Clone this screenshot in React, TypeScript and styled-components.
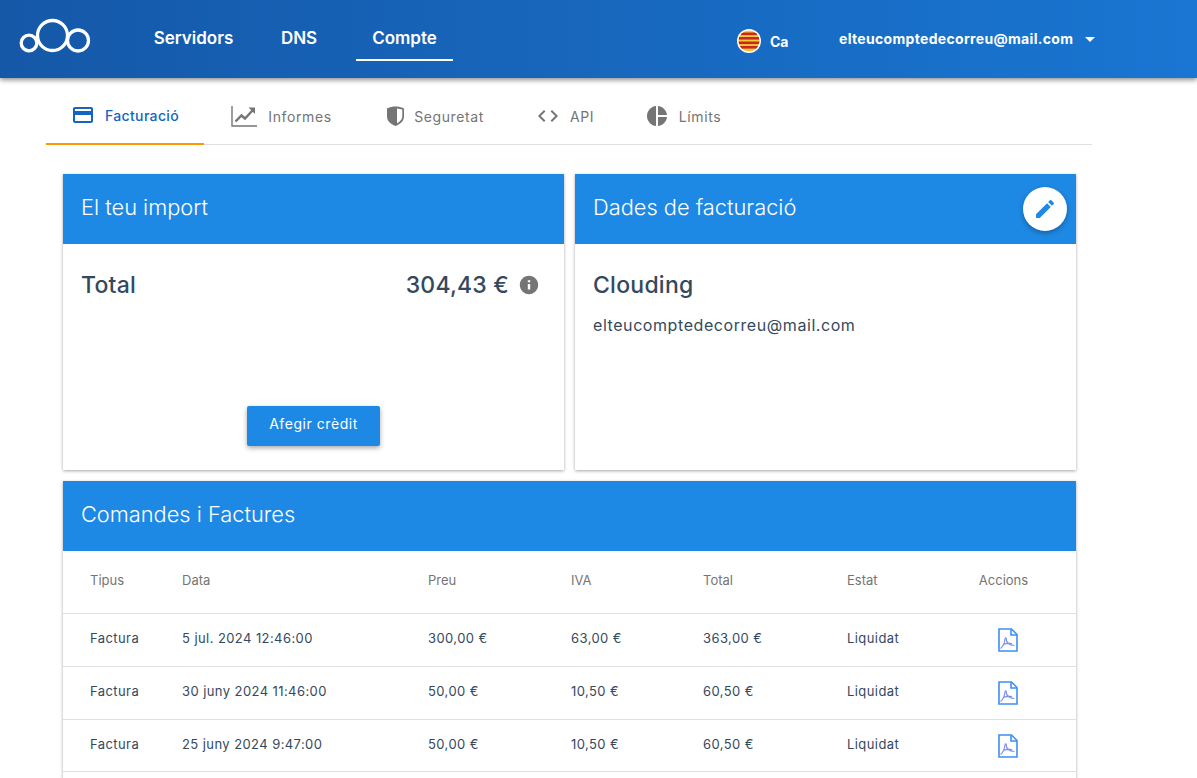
import React from "react";
import styled, { createGlobalStyle } from "styled-components";

const Global = createGlobalStyle`
  html, body { margin: 0; padding: 0; background: #fff; height: 778px; overflow: hidden; }
  body { font-family: Inter, Roboto, "Liberation Sans", sans-serif; }
  * { box-sizing: border-box; }
`;
const Page = styled.div`width: 1197px; height: 778px; overflow: hidden;`;
const Header = styled.header`
  height: 78px; display: flex; align-items: center; color: #fff; position: relative; z-index: 2;
  background: linear-gradient(90deg, #1558a8 0%, #1976d2 100%);
  box-shadow: 0 2px 5px rgba(0,0,0,.45);
`;
const LogoBox = styled.div`width: 154px; padding-left: 19px; display: flex; margin-top: -6px;`;
const NavLink = styled.a<{ $active?: boolean; $w: number; $ml?: number }>`
  width: ${p => p.$w}px; margin-left: ${p => p.$ml ?? 0}px; height: 44px; display: flex; align-items: center; justify-content: center;
  font-size: 17px; font-weight: 600; padding-top: 0;
  border-bottom: 2px solid ${p => (p.$active ? "#fff" : "transparent")};
`;
const Nav = styled.nav`display: flex; align-items: center;`;
const Lang = styled.div`
  margin-left: 284px; display: flex; align-items: center; gap: 9px; font-size: 14px; font-weight: 700; margin-top: 3px; width: 102px;
  span { position: relative; top: 1px; }
`;
const User = styled.div`display: flex; align-items: center; gap: 12px; font-size: 14px; font-weight: 700; letter-spacing: .32px; margin-top: -2px;`;
const Caret = styled.i`width: 0; height: 0; border-left: 5.5px solid transparent; border-right: 5.5px solid transparent; border-top: 5px solid #fff; margin-top: 2px;`;
const Tabs = styled.div`margin-left: 46px; width: 1046px; height: 67px; display: flex; border-bottom: 1px solid #e0e0e0;`;
const Tab = styled.a<{ $active?: boolean; $w: number }>`
  width: ${p => p.$w}px; height: 67px; display: flex; align-items: center; justify-content: center; gap: 10px;
  font-size: 14px; font-weight: ${p => (p.$active ? 500 : 400)}; letter-spacing: ${p => (p.$active ? ".35px" : ".6px")}; padding-top: 9px;
  color: ${p => (p.$active ? "#1565c0" : "#757575")};
  border-bottom: ${p => (p.$active ? "2px solid #ff9800" : "none")};
`;
const Content = styled.main`padding: 29px 0 0 63px; width: 1076px; display: grid; grid-template-columns: 501px 501px; gap: 11px;`;
const Card = styled.section<{ $wide?: boolean }>`
  background: #fff; position: relative;
  grid-column: ${p => (p.$wide ? "1 / 3" : "auto")};
  height: ${p => (p.$wide ? "500px" : "296px")};
  box-shadow: 0 1px 3px rgba(0,0,0,.35);
`;
const CardHead = styled.h2`
  margin: 0; height: 70px; background: #1e88e5; color: #fff; font-size: 21.8px; font-weight: 300;
  display: flex; align-items: center; padding: 0 18px 4px;
`;
const Fab = styled.button`
  position: absolute; right: 9px; top: 13px; width: 44px; height: 44px; border-radius: 50%; border: 0; background: #fff;
  display: flex; align-items: center; justify-content: center; box-shadow: 0 2px 5px rgba(0,0,0,.3); padding: 0;
`;
const TotalRow = styled.div`
  display: flex; align-items: center; padding: 27px 24px 0 18px; font-size: 23px; font-weight: 500; color: #34495e; line-height: 28px; letter-spacing: .2px;
`;
const Amount = styled.span`margin-left: auto; margin-right: 9px;`;
const ButtonWrap = styled.div`position: absolute; left: 0; right: 0; bottom: 24px; display: flex; justify-content: center;`;
const Btn = styled.button`
  width: 133px; height: 40px; border: 0; border-radius: 2px; background: #1e88e5; color: #fff; font: 400 14px Inter, sans-serif; letter-spacing: .55px;
  padding-bottom: 6px; box-shadow: 0 2px 5px rgba(0,0,0,.35);
`;
const Company = styled.div`padding: 27px 18px 0; font-size: 23px; font-weight: 500; color: #34495e; line-height: 28px; letter-spacing: .25px;`;
const Mail = styled.div`padding: 16px 18px 0; font-size: 16px; color: #34495e; line-height: 20px; letter-spacing: .57px;`;
const Row = styled.div<{ $head?: boolean }>`
  display: grid; grid-template-columns: 92px 246px 143px 132px 144px 112px 89px; padding-left: 27px; align-items: center;
  height: ${p => (p.$head ? "63px" : "53px")}; border-bottom: 1px solid #e0e0e0;
  font-size: 13px; font-weight: 400; letter-spacing: ${p => (p.$head ? "0" : ".42px")}; color: ${p => (p.$head ? "#757575" : "#34495e")};
  &:last-child { height: 52px; }
`;
const Cell = styled.div`position: relative; top: -2px;`;
const HeadAction = styled(Cell)`text-align: center;`;
const Action = styled.div`display: flex; justify-content: center; position: relative; left: 4px;`;

const Logo = () => (
  <svg width="72" height="36" viewBox="0 0 72 36" fill="none" stroke="#fff" strokeWidth="3.3">
    <circle cx="10" cy="25" r="7.8" />
    <circle cx="33.5" cy="17.5" r="15" />
    <circle cx="59" cy="22.5" r="10.5" />
  </svg>
);
const Flag = () => (
  <svg width="24" height="24" viewBox="0 0 24 24">
    <defs><clipPath id="fc"><circle cx="12" cy="12" r="10.5" /></clipPath></defs>
    <circle cx="12" cy="12" r="12" fill="#fff" />
    <g clipPath="url(#fc)">
      <rect width="24" height="24" fill="#f5c93c" />
      <rect y="3.5" width="24" height="2.6" fill="#c8281e" />
      <rect y="8" width="24" height="2.6" fill="#c8281e" />
      <rect y="12.5" width="24" height="2.6" fill="#c8281e" />
      <rect y="17" width="24" height="2.6" fill="#c8281e" />
    </g>
  </svg>
);
const Icon = ({ d, fill, size = 24 }: { d: string; fill: string; size?: number }) => (
  <svg width={size} height={size} viewBox="0 0 24 24" fill={fill}><path d={d} /></svg>
);
const TrendIcon = () => (
  <svg width="27" height="24" viewBox="0 0 27 24" fill="none" stroke="#757575">
    <path d="M1 2v20h25" strokeWidth="1.400" />
    <path d="M4.500 17.500l6-6 3.500 3 7.500-8" strokeWidth="2.400" />
    <path d="M17.500 3.500h6.500v6.500z" fill="#757575" stroke="none" />
  </svg>
);
const ShieldIcon = () => (
  <svg width="17" height="20" viewBox="0 0 17 20">
    <path fillRule="evenodd" fill="#757575" d="M0 2.500C3 1 5.500.5 8.500.5s5.500.5 8.500 2v8c0 4.500-3.500 7.500-8.500 9.500C3.500 18 0 15 0 10.500zM10 2.400v14.800c3-1.500 5.300-3.800 5.300-6.900V3.600c-1.700-.7-3.500-1.100-5.300-1.200z" />
  </svg>
);
const Pdf = () => (
  <svg width="20" height="24" viewBox="0 0 20 24" fill="none" stroke="#3f8ff0" strokeWidth="1.6">
    <path d="M1 1h12.500L19 6.500V23H1z" />
    <path d="M13 1.500v5.500h6" />
    <path d="M2.500 20.500c2-1.500 4-5 4.500-9.500 .2-1.600 1.400-1.400 1.300 0-.2 3 2.500 6 8 6.500M5 16.500c3-1 6-1.500 9-1" stroke="#7d8ff0" strokeWidth="1.200" />
  </svg>
);

const rows = [
  ["5 jul. 2024 12:46:00", "300,00 €", "63,00 €", "363,00 €"],
  ["30 juny 2024 11:46:00", "50,00 €", "10,50 €", "60,50 €"],
  ["25 juny 2024 9:47:00", "50,00 €", "10,50 €", "60,50 €"],
];

export default function App() {
  return (
    <Page>
      <Global />
      <Header>
        <LogoBox><Logo /></LogoBox>
        <Nav>
          <NavLink $w={79}>Servidors</NavLink>
          <NavLink $w={34} $ml={49}>DNS</NavLink>
          <NavLink $w={97} $ml={40} $active>Compte</NavLink>
        </Nav>
        <Lang><Flag /><span>Ca</span></Lang>
        <User>elteucomptedecorreu@mail.com <Caret /></User>
      </Header>
      <Tabs>
        <Tab $w={158} $active><Icon fill="#1565c0" d="M20 4H4c-1.110 0-1.990.89-1.990 2L2 18c0 1.110.89 2 2 2h16c1.110 0 2-.89 2-2V6c0-1.110-.89-2-2-2zm0 14H4v-6h16v6zm0-10H4V6h16v2z" />Facturació</Tab>
        <Tab $w={155}><TrendIcon />Informes</Tab>
        <Tab $w={153}><ShieldIcon />Seguretat</Tab>
        <Tab $w={106}><Icon fill="#757575" d="M9.400 16.600 4.800 12l4.600-4.600L8 6l-6 6 6 6 1.400-1.400zm5.200 0 4.600-4.600-4.600-4.600L16 6l6 6-6 6-1.400-1.400z" />API</Tab>
        <Tab $w={130}><Icon fill="#757575" d="M11 2v20c-5.070-.5-9-4.790-9-10s3.930-9.500 9-10zm2.030 0v8.990H22c-.47-4.740-4.240-8.520-8.970-8.990zm0 11.010V22c4.740-.47 8.500-4.250 8.970-8.990h-8.970z" />Límits</Tab>
      </Tabs>
      <Content>
        <Card>
          <CardHead>El teu import</CardHead>
          <TotalRow>
            Total
            <Amount>304,43 €</Amount>
            <Icon size={22} fill="#757575" d="M12 2C6.480 2 2 6.480 2 12s4.480 10 10 10 10-4.480 10-10S17.520 2 12 2zm1.300 15h-2.600v-6h2.600v6zm0-8h-2.600V6.800h2.600V9z" />
          </TotalRow>
          <ButtonWrap><Btn>Afegir crèdit</Btn></ButtonWrap>
        </Card>
        <Card>
          <CardHead>Dades de facturació</CardHead>
          <Fab aria-label="edit"><Icon fill="#1e88e5" d="M3 17.250V21h3.750L17.810 9.940l-3.750-3.750L3 17.250zM20.710 7.040a.996.996 0 0 0 0-1.410l-2.340-2.340a.996.996 0 0 0-1.410 0l-1.830 1.830 3.750 3.750 1.830-1.830z" /></Fab>
          <Company>Clouding</Company>
          <Mail>elteucomptedecorreu@mail.com</Mail>
        </Card>
        <Card $wide>
          <CardHead>Comandes i Factures</CardHead>
          <Row $head>
            <Cell>Tipus</Cell><Cell>Data</Cell><Cell>Preu</Cell><Cell>IVA</Cell><Cell>Total</Cell><Cell>Estat</Cell>
            <HeadAction>Accions</HeadAction>
          </Row>
          {rows.map((r) => (
            <Row key={r[0]}>
              <Cell>Factura</Cell>
              {r.map((c, i) => <Cell key={i}>{c}</Cell>)}
              <Cell>Liquidat</Cell>
              <Action><Pdf /></Action>
            </Row>
          ))}
        </Card>
      </Content>
    </Page>
  );
}
